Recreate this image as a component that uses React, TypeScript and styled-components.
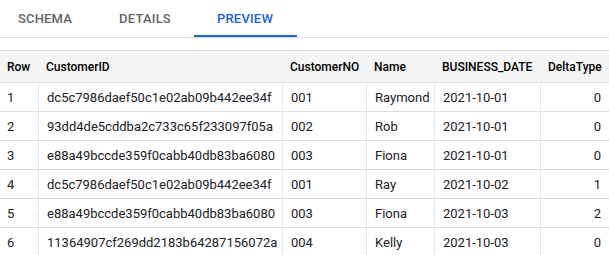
import React from 'react'
import styled, { createGlobalStyle } from 'styled-components'

const GlobalStyle = createGlobalStyle`
  html, body {
    margin: 0;
    padding: 0;
    background: #ffffff;
  }
  body {
    font-family: Roboto, "Liberation Sans", Arial, sans-serif;
    color: #202124;
    overflow: hidden;
  }
`

const TABS = ['SCHEMA', 'DETAILS', 'PREVIEW']

const COLUMNS = [
  { key: 'row', label: 'Row', width: 38 },
  { key: 'id', label: 'CustomerID', width: 244 },
  { key: 'no', label: 'CustomerNO', width: 84 },
  { key: 'name', label: 'Name', width: 68 },
  { key: 'date', label: 'BUSINESS_DATE', width: 106 },
  { key: 'delta', label: 'DeltaType', width: 69, numeric: true },
]

const ROWS = [
  ['1', 'dc5c7986daef50c1e02ab09b442ee34f', '001', 'Raymond', '2021-10-01', '0'],
  ['2', '93dd4de5cddba2c733c65f233097f05a', '002', 'Rob', '2021-10-01', '0'],
  ['3', 'e88a49bccde359f0cabb40db83ba6080', '003', 'Fiona', '2021-10-01', '0'],
  ['4', 'dc5c7986daef50c1e02ab09b442ee34f', '001', 'Ray', '2021-10-02', '1'],
  ['5', 'e88a49bccde359f0cabb40db83ba6080', '003', 'Fiona', '2021-10-03', '2'],
  ['6', '11364907cf269dd2183b64287156072a', '004', 'Kelly', '2021-10-03', '0'],
]

const Page = styled.div`
  width: 609px;
  display: flex;
  flex-direction: column;
`

const TabBar = styled.div`
  display: flex;
  height: 37px;
  border-bottom: 1px solid #dadce0;
  margin-left: -5px;
`

const Tab = styled.div<{ $active?: boolean }>`
  position: relative;
  width: 100px;
  display: flex;
  align-items: center;
  justify-content: center;
  font-size: 13px;
  font-weight: 500;
  letter-spacing: 0.2px;
  color: ${(p) => (p.$active ? '#1a62d6' : '#5f6368')};

  ${(p) =>
    p.$active &&
    `
    &::after {
      content: '';
      position: absolute;
      left: -1px;
      right: -2px;
      bottom: 0;
      height: 2px;
      background: #1a62d6;
    }
  `}
`

const TableWrap = styled.div`
  margin-top: 12px;
`

const Table = styled.table`
  border-collapse: separate;
  border-spacing: 0;
  table-layout: fixed;
  width: 609px;
  font-size: 13px;
`

const HeadCell = styled.th`
  height: 31px;
  padding: 0 8px;
  background: #f5f5f5;
  border-top: 1px solid #dadce0;
  border-bottom: 1px solid #dadce0;
  font-size: 12px;
  font-weight: 500;
  text-align: left;
  white-space: nowrap;
  color: #000000;
  &:first-child {
    padding-left: 7px;
  }
`

const Cell = styled.td<{ $numeric?: boolean }>`
  height: 28px;
  padding: 0 8px;
  border-bottom: 1px solid #dadce0;
  border-left: 1px solid #e8eaed;
  white-space: nowrap;
  color: #202124;
  text-align: ${(p) => (p.$numeric ? 'right' : 'left')};
  &:first-child {
    border-left: none;
    padding-left: 7px;
  }
`

export default function App() {
  return (
    <>
      <GlobalStyle />
      <Page>
        <TabBar>
          {TABS.map((t) => (
            <Tab key={t} $active={t === 'PREVIEW'}>
              {t}
            </Tab>
          ))}
        </TabBar>
        <TableWrap>
          <Table>
            <colgroup>
              {COLUMNS.map((c) => (
                <col key={c.key} style={{ width: c.width }} />
              ))}
            </colgroup>
            <thead>
              <tr>
                {COLUMNS.map((c) => (
                  <HeadCell key={c.key}>{c.label}</HeadCell>
                ))}
              </tr>
            </thead>
            <tbody>
              {ROWS.map((r, i) => (
                <tr key={i}>
                  {r.map((v, j) => (
                    <Cell key={j} $numeric={COLUMNS[j].numeric}>
                      {v}
                    </Cell>
                  ))}
                </tr>
              ))}
            </tbody>
          </Table>
        </TableWrap>
      </Page>
    </>
  )
}
